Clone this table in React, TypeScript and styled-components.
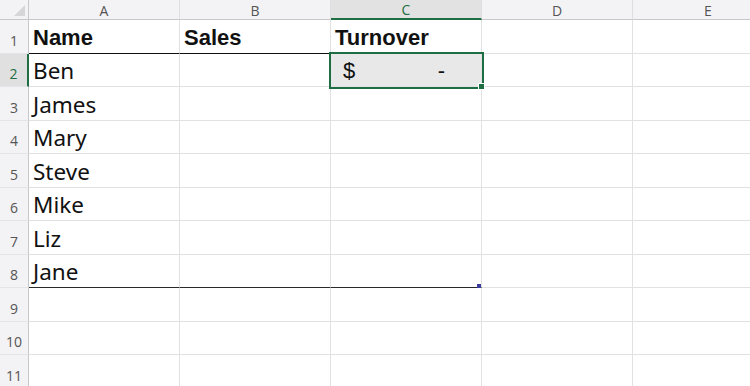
import React from "react";
import styled, { createGlobalStyle, css } from "styled-components";

const Global = createGlobalStyle`
  html, body { margin: 0; padding: 0; background: #ffffff; overflow: hidden; }
  body { width: 750px; height: 386px; }
`;

const GREEN = "#1f6e43";
const GRID = "#e1e1e1";
const HEAD_BG = "#f3f2f4";
const HEAD_LINE = "#c8c8cc";

const Sheet = styled.div`
  display: grid;
  grid-template-columns: 29px repeat(5, 151px);
  grid-template-rows: 20px repeat(11, 33.5px);
  width: 750px;
  height: 386px;
  overflow: hidden;
  font-family: "Noto Sans", "Open Sans", sans-serif;
`;

const Corner = styled.div`
  position: relative;
  background: ${HEAD_BG};
  border-right: 1px solid ${HEAD_LINE};
  border-bottom: 1px solid ${HEAD_LINE};
  box-sizing: border-box;
  &::after {
    content: "";
    position: absolute;
    right: 3px;
    bottom: 3px;
    width: 0;
    height: 0;
    border-left: 11px solid transparent;
    border-bottom: 11px solid #d6d6d8;
  }
`;

const ColHead = styled.div<{ $active?: boolean }>`
  box-sizing: border-box;
  display: flex;
  align-items: center;
  justify-content: center;
  font-family: "Open Sans", "Noto Sans", sans-serif;
  font-size: 14px;
  color: #555;
  background: ${HEAD_BG};
  border-right: 1px solid #dedde2;
  border-bottom: 1px solid ${HEAD_LINE};
  padding-top: 1px;
  ${(p) =>
    p.$active &&
    css`
      background: #e2e2e2;
      color: ${GREEN};
      border-bottom: 2px solid ${GREEN};
    `}
`;

const RowHead = styled.div<{ $active?: boolean }>`
  box-sizing: border-box;
  display: flex;
  align-items: flex-end;
  justify-content: center;
  padding-bottom: 3px;
  font-family: "Open Sans", "Noto Sans", sans-serif;
  font-size: 14px;
  color: #555;
  background: ${HEAD_BG};
  border-right: 1px solid ${HEAD_LINE};
  border-bottom: 1px solid #e4e3e8;
  ${(p) =>
    p.$active &&
    css`
      background: #e0e0e0;
      color: ${GREEN};
      border-right: 2px solid ${GREEN};
    `}
`;

const Cell = styled.div<{ $bold?: boolean; $edge?: "dark" | "black"; $selected?: boolean }>`
  position: relative;
  box-sizing: border-box;
  display: flex;
  align-items: flex-end;
  padding: 0 4px 1px 4px;
  border-right: 1px solid ${GRID};
  border-bottom: 1px solid ${(p) => (p.$edge === "black" ? "#111" : p.$edge === "dark" ? "#2a2a2a" : GRID)};
  font-size: 22.5px;
  line-height: 28px;
  color: #111;
  white-space: nowrap;
  ${(p) =>
    p.$bold &&
    css`
      font-family: "Liberation Sans", Arial, sans-serif;
      font-weight: 700;
      font-size: 22px;
    `}
  ${(p) =>
    p.$selected &&
    css`
      background: #e8e8e8;
      z-index: 2;
      outline: 2px solid ${GREEN};
      outline-offset: 0px;
    `}
`;

const Accounting = styled.div`
  display: flex;
  justify-content: space-between;
  width: 100%;
  padding: 0 32px 0 8px;
  box-sizing: border-box;
  font-family: "Liberation Sans", Arial, sans-serif;
  font-size: 22px;
`;

const FillHandle = styled.span`
  position: absolute;
  right: -4px;
  bottom: -4px;
  width: 5px;
  height: 5px;
  background: ${GREEN};
  border: 1px solid #fff;
`;

const ResizeHandle = styled.span`
  position: absolute;
  right: 0px;
  bottom: -1px;
  width: 4px;
  height: 4px;
  background: #3c3c9c;
`;

const names = ["Ben", "James", "Mary", "Steve", "Mike", "Liz", "Jane"];
const cols = ["A", "B", "C", "D", "E"];

export default function App() {
  const rows: React.ReactNode[] = [];
  for (let r = 1; r <= 11; r++) {
    rows.push(
      <RowHead key={`rh${r}`} $active={r === 2}>
        {r}
      </RowHead>
    );
    for (let c = 0; c < 5; c++) {
      const key = `c${r}-${c}`;
      let edge: "dark" | "black" | undefined;
      if (r === 1 && c <= 1) edge = "black";
      if (r === 8 && c <= 2) edge = "dark";
      if (r === 1) {
        const text = ["Name", "Sales", "Turnover", "", ""][c];
        rows.push(
          <Cell key={key} $bold $edge={edge}>
            {text}
          </Cell>
        );
      } else if (r === 2 && c === 2) {
        rows.push(
          <Cell key={key} $selected>
            <Accounting>
              <span>$</span>
              <span>-</span>
            </Accounting>
            <FillHandle />
          </Cell>
        );
      } else {
        const text = c === 0 && r >= 2 && r <= 8 ? names[r - 2] : "";
        rows.push(
          <Cell key={key} $edge={edge}>
            {text}
            {r === 8 && c === 2 && <ResizeHandle />}
          </Cell>
        );
      }
    }
  }
  return (
    <>
      <Global />
      <Sheet>
        <Corner />
        {cols.map((c) => (
          <ColHead key={c} $active={c === "C"}>
            {c}
          </ColHead>
        ))}
        {rows}
      </Sheet>
    </>
  );
}
